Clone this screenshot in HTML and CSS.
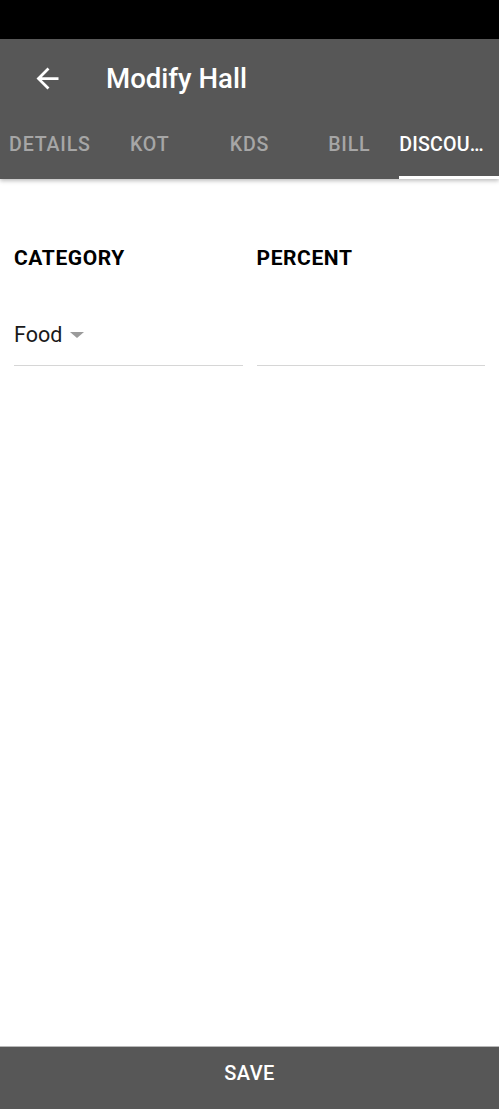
FILE: index.html
```html
<!DOCTYPE html>
<html lang="en">
<head>
  <meta charset="UTF-8" />
  <title>Modify Hall</title>
  <link rel="stylesheet" href="styles.css">
</head>
<body>

  <div class="status-bar"></div>

  <div class="app-header">
    <div class="toolbar">
      <button class="back-btn" aria-label="Back">
        <svg viewBox="0 0 24 24" width="33" height="33">
          <path fill="#ffffff" d="M20 11H7.83l5.59-5.59L12 4l-8 8 8 8 1.41-1.41L7.83 13H20v-2z"/>
        </svg>
      </button>
      <h1 class="title">Modify Hall</h1>
    </div>
    <div class="tabs">
      <div class="tab"><span class="tab-label">DETAILS</span></div>
      <div class="tab"><span class="tab-label">KOT</span></div>
      <div class="tab"><span class="tab-label">KDS</span></div>
      <div class="tab"><span class="tab-label">BILL</span></div>
      <div class="tab tab-active" title="DISCOUNT"><span class="tab-label">DISCOU…</span></div>
    </div>
  </div>

  <div class="content">
    <div class="form-grid">
      <div class="field">
        <div class="field-label">CATEGORY</div>
        <div class="field-input">
          <span class="select-value">Food</span>
          <span class="select-caret"></span>
        </div>
      </div>
      <div class="field">
        <div class="field-label">PERCENT</div>
        <div class="field-input"></div>
      </div>
    </div>
  </div>

  <div class="footer">
    <button class="save-btn">SAVE</button>
  </div>

</body>
</html>
```

FILE: styles.css
```css
/*********************************
 * Base
 *********************************/
html, body {
  margin: 0;
  padding: 0;
  height: 100%;
}
body {
  display: flex;
  flex-direction: column;
  background-color: #ffffff;
  color: #000000;
  font-family: Roboto, "Noto Sans", sans-serif;
}
button {
  font-family: inherit;
  border: none;
  background: none;
  padding: 0;
  cursor: pointer;
}

/* Status bar */
.status-bar {
  height: 39px;
  background-color: #000000;
  flex-shrink: 0;
}

/*============================
  App bar + tabs
============================*/
.app-header {
  background-color: #575757;
  height: 140px;
  box-shadow: 0 2px 4px rgba(0, 0, 0, 0.25);
  position: relative;
  z-index: 1;
  flex-shrink: 0;
  display: flex;
  flex-direction: column;
}
.toolbar {
  height: 78px;
  display: flex;
  align-items: center;
}
.back-btn {
  width: 33px;
  height: 33px;
  margin-left: 31px;
  margin-right: 42px;
  display: flex;
}
.title {
  margin: 0;
  color: #ffffff;
  font-size: 27.6px;
  font-weight: 500;
  padding-top: 1px;
}

.tabs {
  flex: 1;
  display: flex;
}
.tab {
  flex: 1;
  display: flex;
  align-items: center;
  justify-content: center;
  padding-bottom: 4px;
  border-bottom: 3px solid transparent;
}
.tab-label {
  color: #a6a6a6;
  font-size: 19.6px;
  font-weight: 500;
  letter-spacing: 0.8px;
  white-space: nowrap;
}
.tab-active {
  border-bottom-color: #ffffff;
  justify-content: flex-start;
}
.tab-active .tab-label {
  color: #ffffff;
  letter-spacing: 0.2px;
}

/*============================
  Form
============================*/
.content {
  flex: 1;
}
.form-grid {
  display: grid;
  grid-template-columns: 1fr 1fr;
  gap: 14px;
  padding: 0 14px;
  margin-top: 65px;
}
.field-label {
  font-size: 21px;
  font-weight: 700;
  letter-spacing: 0.6px;
  height: 28px;
  line-height: 28px;
}
.field-input {
  margin-top: 51px;
  height: 42px;
  border-bottom: 1px solid #d6d6d6;
  display: flex;
  align-items: flex-start;
}
.select-value {
  font-size: 21.5px;
  line-height: 24px;
  color: #1a1a1a;
}
.select-caret {
  width: 0;
  height: 0;
  margin-left: 8px;
  margin-top: 9px;
  border-left: 7px solid transparent;
  border-right: 7px solid transparent;
  border-top: 6px solid #9b9b9b;
}

/*============================
  Save bar
============================*/
.footer {
  flex-shrink: 0;
  border-top: 1px solid #b8b8b8;
}
.save-btn {
  display: block;
  width: 100%;
  height: 62px;
  padding-bottom: 10px;
  background-color: #575757;
  color: #ffffff;
  font-size: 20px;
  font-weight: 500;
  letter-spacing: 0.4px;
}
```
